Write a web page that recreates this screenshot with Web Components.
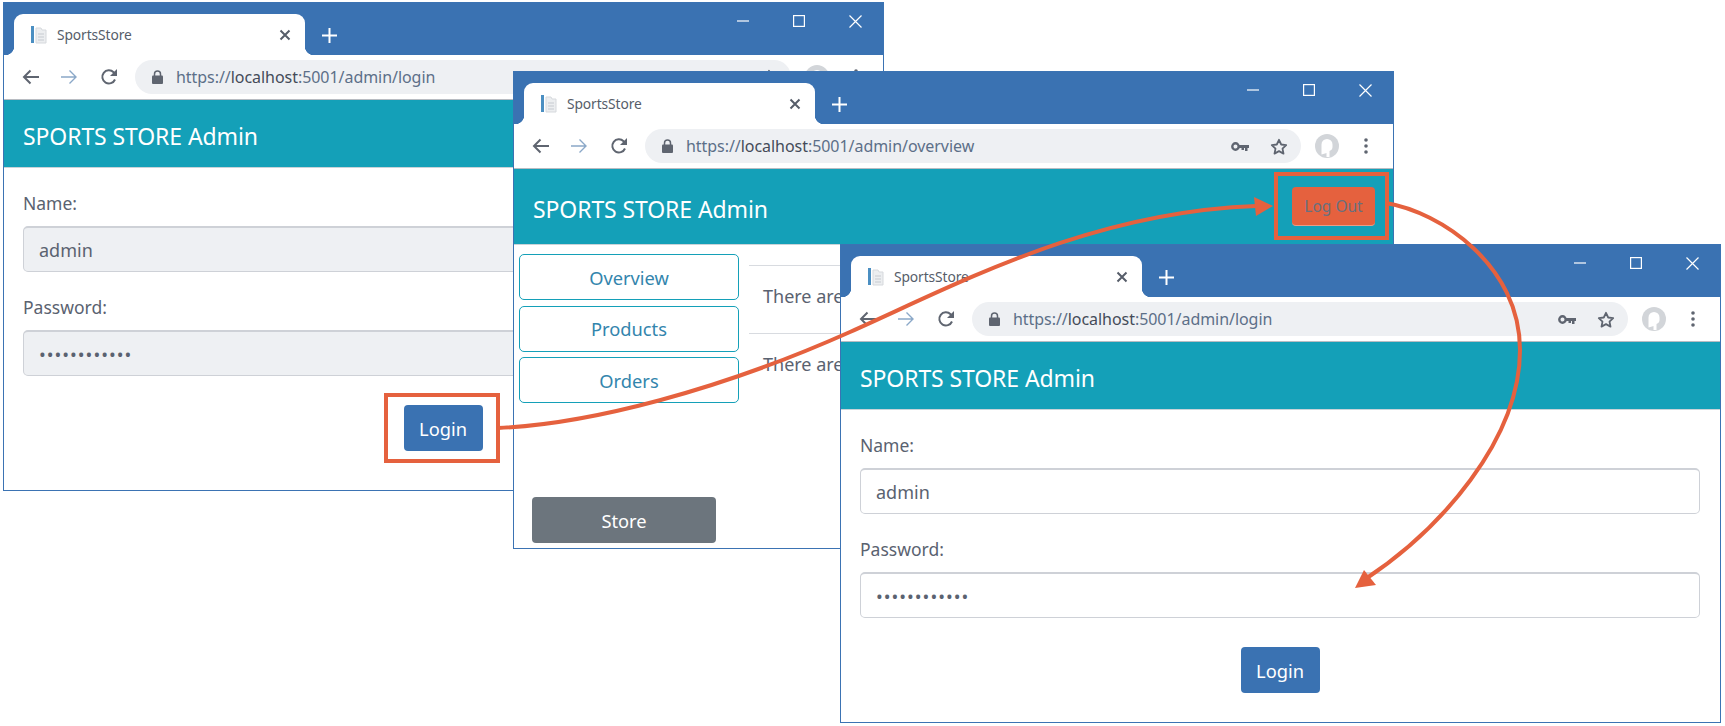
<!DOCTYPE html>
<html>
<head>
<meta charset="utf-8">
<title>SportsStore</title>
<style>
    html, body { margin:0; padding:0; background:#fff; }
    body { font-family:"Noto Sans","Open Sans",sans-serif; color:#5a6270; }
</style>
</head>
<body>
<desk-top>
    <browser-window path="/admin/login" style="--x:3px;--y:2px;--h:489px;">
        <admin-header>SPORTS STORE Admin</admin-header>
        <login-form filled="1" value="admin"></login-form>
    </browser-window>

    <browser-window path="/admin/overview" style="--x:513px;--y:71px;--h:478px;">
        <admin-header>
            SPORTS STORE Admin
            <action-button slot="action" kind="logout">Log Out</action-button>
        </admin-header>
        <overview-page></overview-page>
    </browser-window>

    <browser-window path="/admin/login" style="--x:840px;--y:244px;--h:479px;">
        <admin-header>SPORTS STORE Admin</admin-header>
        <login-form value="admin"></login-form>
    </browser-window>

    <flow-arrows></flow-arrows>
</desk-top>

<script>
// ===== DESKTOP =====
customElements.define('desk-top', class extends HTMLElement {
    connectedCallback() {
        this.attachShadow({ mode: 'open' });
        this.shadowRoot.innerHTML = `
            <style>
                :host { display:block; position:relative; width:1725px; height:726px; overflow:hidden; background:#fff; }
            </style>
            <slot></slot>
        `;
    }
});

// ===== BROWSER WINDOW =====
customElements.define('browser-window', class extends HTMLElement {
    connectedCallback() {
        const path = this.getAttribute('path');
        this.attachShadow({ mode: 'open' });
        this.shadowRoot.innerHTML = `
            <style>
                :host {
                    display:flex; flex-direction:column;
                    position:absolute; left:var(--x); top:var(--y);
                    width:881px; height:var(--h); box-sizing:border-box;
                    border:1.5px solid #3b73b3; background:#fff;
                }
                .titlebar { flex:none; height:52px; background:#3a72b2; display:flex; align-items:flex-end; padding-left:10px; position:relative; }
                .tab {
                    width:291px; height:41px; box-sizing:border-box; background:#fff;
                    border-radius:9px 9px 0 0; position:relative;
                    display:flex; align-items:center; padding:0 14px 0 16px;
                    font-size:13.800px; color:#565d69;
                }
                .tab::before, .tab::after { content:''; position:absolute; bottom:0; width:9px; height:9px; }
                .tab::before { left:-9px; background:radial-gradient(circle at 0 0, transparent 9px, #fff 9.5px); }
                .tab::after { right:-9px; background:radial-gradient(circle at 100% 0, transparent 9px, #fff 9.5px); }
                .tab .name { margin-left:9px; flex:1; letter-spacing:-0.1px; }
                .plus { margin:0 0 12px 17px; }
                .controls { position:absolute; right:0; top:0; display:flex; }
                .controls div { width:56px; height:30px; display:flex; align-items:center; justify-content:center; padding-top:3px; }
                .toolbar { flex:none; height:45px; background:#fff; display:flex; align-items:center; padding-left:18px; box-sizing:border-box; border-bottom:1px solid #b8bcc2; }
                .nav { width:39px; display:flex; }
                .pill {
                    margin-left:-2px; flex:1; height:34px; border-radius:17px; background:#eef0f3;
                    display:flex; align-items:center; padding:0 13px 0 17px;
                    font-size:16px; color:#5c6f88;
                }
                .pill .url { margin-left:13px; flex:1; white-space:nowrap; letter-spacing:-0.05px; }
                .pill b { font-weight:400; color:#444b58; }
                .pill .key { margin-right:21px; }
                .side { width:92px; flex:none; display:flex; align-items:center; padding-left:14px; box-sizing:border-box; }
                .side .dots { margin-left:25px; }
                .content { flex:1; min-height:0; display:flex; flex-direction:column; }
            </style>
            <div class="titlebar">
                <div class="tab">
                    <svg width="18" height="19" viewBox="0 0 18 19">
                        <rect x="1" y="1" width="3" height="17" fill="#4b8fc2"/>
                        <path d="M6 3h5l1 2h4v13H6z" fill="#eceef0" stroke="#d6d9dd"/>
                        <path d="M8 9h6M8 12h6M8 15h6" stroke="#c6cad0"/>
                    </svg>
                    <span class="name">SportsStore</span>
                    <svg width="12" height="12" viewBox="0 0 12 12"><path d="M1.5 1.5l9 9M10.5 1.5l-9 9" stroke="#565d69" stroke-width="2"/></svg>
                </div>
                <svg class="plus" width="15" height="15" viewBox="0 0 15 15"><path d="M7.5 0v15M0 7.5h15" stroke="#fff" stroke-width="2"/></svg>
                <div class="controls">
                    <div><svg width="12" height="2" viewBox="0 0 12 2"><path d="M0 1h12" stroke="#fff" stroke-width="1.2"/></svg></div>
                    <div><svg width="12" height="12" viewBox="0 0 12 12"><rect x=".6" y=".6" width="10.8" height="10.8" fill="none" stroke="#fff" stroke-width="1.2"/></svg></div>
                    <div><svg width="13" height="13" viewBox="0 0 13 13"><path d="M.5.5l12 12M12.5.5l-12 12" stroke="#fff" stroke-width="1.2"/></svg></div>
                </div>
            </div>
            <div class="toolbar">
                <div class="nav"><svg width="17" height="16" viewBox="0 0 17 16"><path d="M17 8H2M8.5 1.5L2 8l6.5 6.5" fill="none" stroke="#5f6570" stroke-width="2"/></svg></div>
                <div class="nav"><svg width="17" height="16" viewBox="0 0 17 16"><path d="M0 8h15M8.5 1.5L15 8l-6.5 6.5" fill="none" stroke="#8aa8c8" stroke-width="1.4"/></svg></div>
                <div class="nav" style="width:37px"><svg width="18" height="18" viewBox="0 0 18 18"><path d="M15 11.5A6.6 6.6 0 1 1 13.6 4.2L15.5 6" fill="none" stroke="#5f6570" stroke-width="2"/><path d="M17 1v7h-7z" fill="#5f6570"/></svg></div>
                <div class="pill">
                    <svg width="11" height="14" viewBox="0 0 11 14"><path d="M2.5 6V4a3 3 0 0 1 6 0v2" fill="none" stroke="#5f6570" stroke-width="1.5"/><rect y="5.5" width="11" height="8.5" rx="1" fill="#5f6570"/></svg>
                    <span class="url">https://<b>localhost</b>:5001${path}</span>
                    <svg class="key" width="18" height="11" viewBox="0 0 18 11"><circle cx="4.5" cy="5.5" r="3.2" fill="none" stroke="#5f6570" stroke-width="2.4"/><path d="M8 4h10v3h-1.5v3h-2.5V7h-1v2h-2.500V7H8z" fill="#5f6570"/></svg>
                    <svg width="18" height="17" viewBox="0 0 18 17"><path d="M9 1.800l2.200 4.700 5 .6-3.700 3.500 1 5L9 13.100l-4.500 2.500 1-5L1.800 7.100l5-.6z" fill="none" stroke="#5f6570" stroke-width="1.800" stroke-linejoin="round"/></svg>
                </div>
                <div class="side">
                    <svg width="24" height="24" viewBox="0 0 24 24"><circle cx="12" cy="12" r="12" fill="#d2d5d9"/><path d="M6.500 20.500V10.500a5.500 5.500 0 0 1 11 0v2.500c0 2-1 3-3 4v6h-3v-4l-1.500 .5z" fill="#fff"/></svg>
                    <svg class="dots" width="4" height="16" viewBox="0 0 4 16"><circle cx="2" cy="2" r="1.800" fill="#5f6570"/><circle cx="2" cy="8" r="1.800" fill="#5f6570"/><circle cx="2" cy="14" r="1.800" fill="#5f6570"/></svg>
                </div>
            </div>
            <div class="content"><slot></slot></div>
        `;
    }
});

// ===== ADMIN HEADER =====
customElements.define('admin-header', class extends HTMLElement {
    connectedCallback() {
        this.attachShadow({ mode: 'open' });
        this.shadowRoot.innerHTML = `
            <style>
                :host {
                    display:flex; align-items:center; justify-content:space-between; flex:none;
                    box-sizing:border-box; min-height:68px; padding:0 18px 0 19px;
                    background:#14a0b8; color:#fff; font-size:23px;
                    border-bottom:1px solid #c9d3d8;
                }
                span { position:relative; top:2px; letter-spacing:-0.1px; }
                ::slotted([slot=action]) { margin:18px 0; }
            </style>
            <span><slot></slot></span>
            <slot name="action"></slot>
        `;
    }
});

// ===== BUTTON =====
customElements.define('action-button', class extends HTMLElement {
    connectedCallback() {
        this.attachShadow({ mode: 'open' });
        this.shadowRoot.innerHTML = `
            <style>
                :host { display:inline-flex; align-items:center; justify-content:center; box-sizing:border-box; border-radius:4px; font-size:18.300px; }
                :host([kind=primary]), :host(:not([kind])) { width:79px; height:46px; background:#3a72b2; color:#fff; }
                :host([kind=logout]) { width:83px; height:39px; background:#e5613e; color:#68707f; font-size:15.500px; border-bottom:1px solid #ec9c86; }
                :host([kind=secondary]) { width:184px; height:46px; background:#6c757d; color:#fff; }
                :host([kind=nav]) { display:flex; width:220px; height:46px; background:#fff; color:#3385ad; border:1.500px solid #14a0b8; border-radius:5px; }
            </style>
            <slot></slot>
        `;
    }
});

// ===== LOGIN FORM =====
customElements.define('form-field', class extends HTMLElement {
    connectedCallback() {
        const filled = this.hasAttribute('filled');
        this.attachShadow({ mode: 'open' });
        this.shadowRoot.innerHTML = `
            <style>
                :host { display:block; font-size:17.500px; color:#5a6270; margin-bottom:23px; }
                .label { line-height:24px; height:24px; margin-bottom:11px; }
                .input {
                    height:46px; box-sizing:border-box; padding:0 15px; display:flex; align-items:center;
                    border:1px solid #ced1d7; border-top-width:2px; border-radius:5px;
                    background:${filled ? '#eef0f3' : '#fff'}; font-size:18px;
                }
            </style>
            <div class="label">${this.getAttribute('label')}</div>
            <div class="input"><slot></slot></div>
        `;
    }
});

customElements.define('login-form', class extends HTMLElement {
    connectedCallback() {
        const filled = this.hasAttribute('filled') ? 'filled' : '';
        this.attachShadow({ mode: 'open' });
        this.shadowRoot.innerHTML = `
            <style>
                :host { display:block; padding:23px 20px 0 19px; }
                .pw { font-size:18px; letter-spacing:1px; line-height:1; }
                .actions { display:flex; justify-content:center; margin-top:29px; }
            </style>
            <form-field label="Name:" ${filled}>${this.getAttribute('value')}</form-field>
            <form-field label="Password:" ${filled} style="margin-bottom:0"><span class="pw">••••••••••••</span></form-field>
            <div class="actions"><action-button kind="primary">Login</action-button></div>
        `;
    }
});

// ===== OVERVIEW =====
customElements.define('overview-page', class extends HTMLElement {
    connectedCallback() {
        this.attachShadow({ mode: 'open' });
        this.shadowRoot.innerHTML = `
            <style>
                :host { display:flex; flex:1; min-height:0; font-size:18px; color:#5a6270; }
                .side { width:235px; flex:none; box-sizing:border-box; padding:9px 0 5px 5px; display:flex; flex-direction:column; }
                .side .link { margin-bottom:5.500px; }
                .store { margin:auto 0 0 13px; }
                .rows { flex:1; padding:20px 0 0 0; }
                .row { height:68px; box-sizing:border-box; border-top:1px solid #d8dbe0; padding:0 0 7px 14px; display:flex; align-items:center; }
            </style>
            <div class="side">
                <action-button class="link" kind="nav">Overview</action-button>
                <action-button class="link" kind="nav">Products</action-button>
                <action-button class="link" kind="nav">Orders</action-button>
                <action-button class="store" kind="secondary">Store</action-button>
            </div>
            <div class="rows">
                <div class="row">There are</div>
                <div class="row">There are</div>
            </div>
        `;
    }
});

// ===== CALLOUT ARROWS =====
customElements.define('flow-arrows', class extends HTMLElement {
    connectedCallback() {
        this.attachShadow({ mode: 'open' });
        this.shadowRoot.innerHTML = `
            <style>
                :host { display:block; position:absolute; left:0; top:0; width:1725px; height:726px; pointer-events:none; }
                svg { display:block; }
            </style>
            <svg width="1725" height="726" viewBox="0 0 1725 726" fill="none" stroke="#e5613e" stroke-width="4">
                <rect x="386" y="395" width="112" height="66"/>
                <rect x="1276" y="174" width="111" height="64"/>
                <path d="M498 428C590 424 720 390 850 332C960 283 1090 212 1256 206"/>
                <path d="M1254 197L1273 206L1256 216Z" fill="#e5613e" stroke="none"/>
                <path d="M1386 203C1440 212 1520 265 1520 350C1520 440 1440 530 1364 580"/>
                <path d="M1355 588L1364 570L1376 585Z" fill="#e5613e" stroke="none"/>
            </svg>
        `;
    }
});
</script>
</body>
</html>
